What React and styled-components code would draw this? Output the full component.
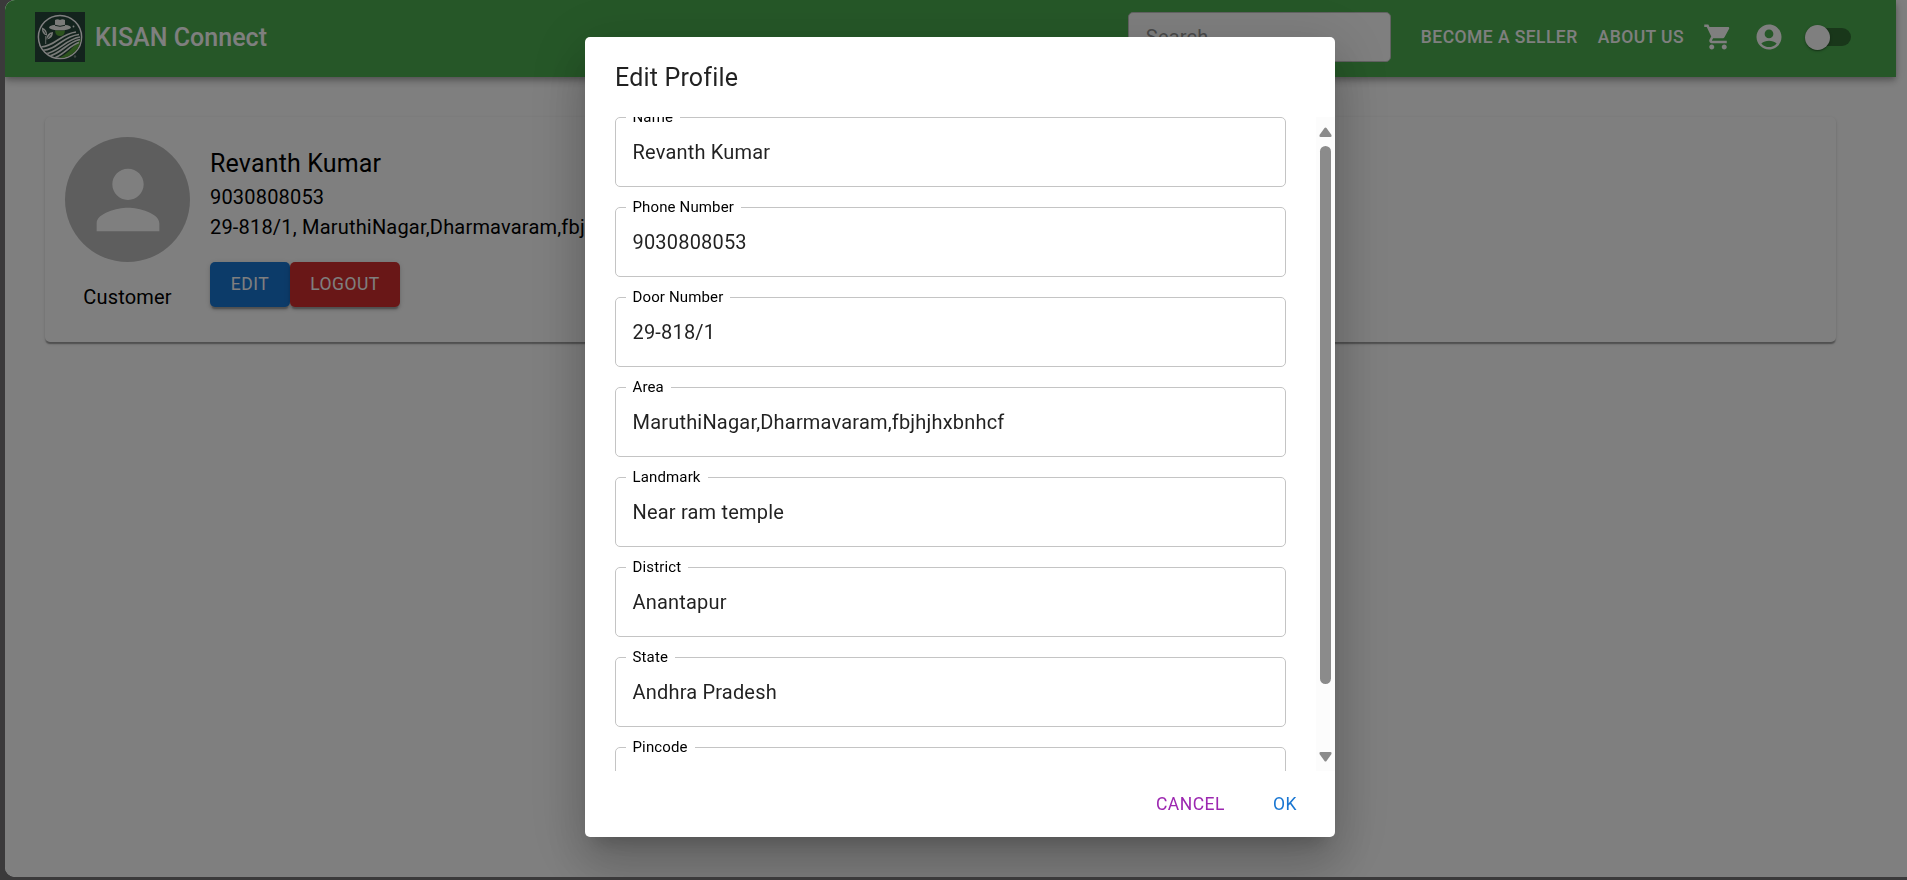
import React from "react";
import styled, { createGlobalStyle, css } from "styled-components";

const GlobalStyle = createGlobalStyle`
  *, *::before, *::after { box-sizing: border-box; }
  html, body { margin: 0; height: 100%; overflow: hidden; }
  body { background: #3b3a3b; font-family: Roboto, "Liberation Sans", sans-serif; color: #000; }
  #root { height: 100%; }
`;

const Window = styled.div`
  height: 100vh;
  padding: 0 0 3px 5px;
`;

const Page = styled.div`
  height: 100%;
  background: #fff;
  border-radius: 10px 0 0 10px;
  overflow: hidden;
  position: relative;
`;

const AppBar = styled.header`
  display: flex;
  align-items: center;
  height: 77px;
  width: 1891px;
  padding: 0 45px 3px 30px;
  background: #4caf50;
  color: #fff;
  box-shadow: 0 2.5px 5px -1px rgba(0, 0, 0, 0.2), 0 5px 6.25px rgba(0, 0, 0, 0.14),
    0 1.25px 12.5px rgba(0, 0, 0, 0.12);
`;

const Brand = styled.h1`
  flex: 1;
  margin: 0 0 0 10px;
  padding-top: 2px;
  font-size: 25px;
  font-weight: 500;
  line-height: 40px;
  letter-spacing: 0.03px;
`;

const SearchBox = styled.input`
  width: 263px;
  height: 50px;
  margin-right: 20px;
  padding: 0 17px;
  border: 1px solid #c4c4c4;
  border-radius: 5px;
  background: #fff;
  font: 400 20px Roboto, sans-serif;
  letter-spacing: 0.19px;
  &::placeholder { color: #949494; opacity: 1; }
`;

const NavLink = styled.a`
  padding: 0 10px;
  font-size: 17.5px;
  font-weight: 500;
  line-height: 31px;
  letter-spacing: 0.44px;
  white-space: nowrap;
`;

const IconButton = styled.span`
  display: flex;
  padding: 0 10.5px;
  &:first-of-type { padding-left: 8.5px; }
  svg { width: 30px; height: 30px; fill: currentColor; }
`;

const Switch = styled.span`
  position: relative;
  width: 46px;
  height: 18px;
  margin-left: 11px;
  border-radius: 9px;
  background: #326e34;
  &::before {
    content: "";
    position: absolute;
    left: 0;
    top: -3px;
    width: 25px;
    height: 25px;
    border-radius: 50%;
    background: #fff;
    box-shadow: 0 2px 1px -1px rgba(0, 0, 0, 0.2), 0 1px 3px rgba(0, 0, 0, 0.3);
  }
`;

const ProfileCard = styled.section`
  display: flex;
  gap: 20px;
  width: 1791px;
  height: 225px;
  margin: 40px 0 0 40px;
  padding: 20px;
  border-radius: 5px;
  background: #fff;
  box-shadow: 0 2.5px 1.25px -1.25px rgba(0, 0, 0, 0.2), 0 1.25px 1.25px rgba(0, 0, 0, 0.14),
    0 1.25px 3.75px rgba(0, 0, 0, 0.12);
`;

const Identity = styled.div`
  display: flex;
  flex-direction: column;
  align-items: center;
  gap: 20px;
`;

const Avatar = styled.div`
  display: grid;
  place-items: center;
  width: 125px;
  height: 125px;
  border-radius: 50%;
  background: #bdbdbd;
  svg { width: 94px; height: 94px; fill: #fff; }
`;

const BodyText = styled.p`
  margin: 0;
  font-size: 20px;
  line-height: 30px;
  letter-spacing: 0.19px;
  white-space: nowrap;
`;

const Details = styled.div`
  padding-top: 5px;
`;

const PersonName = styled.h2`
  height: 40px;
  margin: 0;
  padding-top: 1.5px;
  font-size: 25px;
  font-weight: 400;
  line-height: 39px;
  letter-spacing: 0.16px;
`;

const ButtonRow = styled.div`
  display: flex;
  margin-top: 20px;
`;

const Button = styled.button`
  height: ${(p) => (p.$text ? 46 : 45)}px;
  padding: 0 ${(p) => (p.$text ? 10 : 20)}px;
  border: 0;
  border-radius: 5px;
  font: 400 17.5px/31px Roboto, sans-serif;
  letter-spacing: 0.5px;
  ${(p) =>
    p.$text
      ? css`
          min-width: 80px;
          background: transparent;
          color: ${p.$color};
        `
      : css`
          width: ${p.$width}px;
          background: ${p.$color};
          color: #fff;
          box-shadow: 0 3.75px 1.25px -2.5px rgba(0, 0, 0, 0.2), 0 2.5px 2.5px rgba(0, 0, 0, 0.14),
            0 1.25px 6.25px rgba(0, 0, 0, 0.12);
        `}
`;

const Backdrop = styled.div`
  position: fixed;
  inset: 0 0 3px 5px;
  display: flex;
  justify-content: center;
  align-items: flex-start;
  padding-top: 37px;
  border-radius: 10px 0 0 10px;
  background: rgba(0, 0, 0, 0.5);
  overflow: hidden;
`;

const Dialog = styled.div`
  display: flex;
  flex-direction: column;
  width: 750px;
  height: 800px;
  margin-left: 8px;
  border-radius: 5px;
  background: #fff;
  box-shadow: 0 13.75px 18.75px -8.75px rgba(0, 0, 0, 0.2), 0 30px 47.5px 3.75px rgba(0, 0, 0, 0.14),
    0 11.25px 57.5px 10px rgba(0, 0, 0, 0.12);
`;

const DialogTitle = styled.h2`
  margin: 0;
  padding: 21px 30px 19px;
  color: rgba(0, 0, 0, 0.87);
  font-size: 25px;
  font-weight: 400;
  line-height: 40px;
  letter-spacing: 0.19px;
`;

const DialogContent = styled.div`
  display: flex;
  height: 654px;
  overflow: hidden;
`;

const Fields = styled.div`
  flex: 1;
  padding: 0 30px;
  height: 654px;
  overflow: hidden;
`;

const Field = styled.fieldset`
  height: 79px;
  margin: 0 0 11px;
  margin-top: ${(p) => (p.$first ? -9 : 0)}px;
  padding: 0 16.5px;
  min-width: 0;
  border: 1px solid #c4c4c4;
  border-radius: 5px;
`;

const FieldLabel = styled.legend`
  margin-left: -7px;
  padding: 0 7px;
  font-size: 15px;
  line-height: 18px;
  letter-spacing: 0.14px;
`;

const FieldValue = styled.div`
  padding-top: 11px;
  color: rgba(0, 0, 0, 0.87);
  font-size: 20px;
  line-height: 30px;
  letter-spacing: 0.19px;
`;

const Scrollbar = styled.div`
  display: flex;
  flex-direction: column;
  align-items: center;
  width: 19px;
  padding: 10px 0 9px;
  background: #fcfcfc;
  svg { width: 13px; height: 10px; fill: #8b8b8b; }
`;

const Track = styled.div`
  flex: 1;
  padding-top: 9px;
`;

const Thumb = styled.div`
  width: 11px;
  height: 538px;
  border-radius: 6px;
  background: #8b8b8b;
`;

const DialogActions = styled.div`
  display: flex;
  justify-content: flex-end;
  gap: 10px;
  padding: 10px;
`;

const LogoImage = styled.svg`
  width: 50px;
  height: 50px;
`;

function Logo() {
  return (
    <LogoImage viewBox="0 0 50 50" aria-hidden="true">
      <defs>
        <clipPath id="disc"><circle cx="25" cy="25" r="21" /></clipPath>
      </defs>
      <rect width="50" height="50" fill="#27463b" />
      <circle cx="25" cy="25" r="21.6" fill="none" stroke="#fff" strokeWidth="1.5" />
      <g clipPath="url(#disc)" fill="none" stroke="#f4f7f2" strokeWidth="1.7">
        <path d="M21 47c11-3 17-13 25-20v21z" fill="#58a63a" stroke="none" />
        <path d="M6 35c15-1 19-13 35-15" />
        <path d="M7 38.500c16-1 20-14 37-16" />
        <path d="M9 42c16-2 20-14 36-17" />
        <path d="M13 44.500c14-3 18-14 32-17" />
        <path d="M18 46.500c12-4 16-13 26-16" />
      </g>
      <path d="M20 18.500h10q-.5 5.500-5 5.500T20 18.500z" fill="#58a63a" />
      <path d="M20 8q2.500-1.500 5 0 2.500-1.500 5 0v6H20z" fill="#f4f7f2" />
      <ellipse cx="25" cy="15.400" rx="11" ry="2.900" fill="#f4f7f2" />
      <path d="M20 13.300q5 2 10 0" stroke="#27463b" strokeWidth="1" fill="none" />
      <path d="M7 15.500q5.500 2 5 8-5.500-1-5-8zM18 20q0 7-6.500 7.500Q11 21 18 20z" fill="#f4f7f2" />
      <path d="M10.500 25v7M8.500 18l2.500 4m5 0-4 5" stroke="#27463b" strokeWidth=".7" fill="none" />
      <path d="M10.700 24v8" stroke="#f4f7f2" strokeWidth=".8" />
      <circle cx="38.500" cy="14.500" r=".9" fill="#f4f7f2" />
      <circle cx="40" cy="44.500" r="1.200" fill="#7b8f83" />
    </LogoImage>
  );
}

const Glyph = ({ d }) => (
  <svg viewBox="0 0 24 24" aria-hidden="true"><path d={d} /></svg>
);

const CART = "M7 18c-1.100 0-1.990.9-1.990 2S5.900 22 7 22s2-.9 2-2-.9-2-2-2M1 2v2h2l3.600 7.590-1.350 2.450c-.16.28-.25.61-.25.96 0 1.100.9 2 2 2h12v-2H7.420c-.14 0-.25-.11-.25-.25l.03-.12.9-1.630h7.450c.75 0 1.410-.41 1.750-1.030l3.580-6.490c.08-.14.12-.31.12-.48 0-.55-.45-1-1-1H5.210l-.94-2zm16 16c-1.100 0-1.990.9-1.990 2s.89 2 1.990 2 2-.9 2-2-.9-2-2-2";
const ACCOUNT = "M12 2C6.480 2 2 6.480 2 12s4.480 10 10 10 10-4.480 10-10S17.520 2 12 2m0 4c1.930 0 3.500 1.570 3.500 3.500S13.930 13 12 13s-3.500-1.570-3.500-3.500S10.070 6 12 6m0 14c-2.030 0-4.430-.82-6.140-2.880C7.550 15.800 9.680 15 12 15s4.450.8 6.140 2.120C16.430 19.180 14.030 20 12 20";
const PERSON = "M12 12c2.210 0 4-1.790 4-4s-1.790-4-4-4-4 1.790-4 4 1.790 4 4 4m0 2c-2.670 0-8 1.340-8 4v2h16v-2c0-2.660-5.330-4-8-4";

const FIELDS = [
  ["Name", "Revanth Kumar"],
  ["Phone Number", "9030808053"],
  ["Door Number", "29-818/1"],
  ["Area", "MaruthiNagar,Dharmavaram,fbjhjhxbnhcf"],
  ["Landmark", "Near ram temple"],
  ["District", "Anantapur"],
  ["State", "Andhra Pradesh"],
  ["Pincode", ""],
];

export default function App() {
  return (
    <>
      <GlobalStyle />
      <Window>
        <Page>
          <AppBar>
            <Logo />
            <Brand>KISAN Connect</Brand>
            <SearchBox placeholder="Search…" />
            <NavLink>BECOME A SELLER</NavLink>
            <NavLink>ABOUT US</NavLink>
            <IconButton><Glyph d={CART} /></IconButton>
            <IconButton><Glyph d={ACCOUNT} /></IconButton>
            <Switch />
          </AppBar>
          <ProfileCard>
            <Identity>
              <Avatar><Glyph d={PERSON} /></Avatar>
              <BodyText>Customer</BodyText>
            </Identity>
            <Details>
              <PersonName>Revanth Kumar</PersonName>
              <BodyText>9030808053</BodyText>
              <BodyText>29-818/1, MaruthiNagar,Dharmavaram,fbjhjhxbnhcf</BodyText>
              <ButtonRow>
                <Button $color="#1976d2" $width={80}>EDIT</Button>
                <Button $color="#d32f2f" $width={110}>LOGOUT</Button>
              </ButtonRow>
            </Details>
          </ProfileCard>
        </Page>
      </Window>
      <Backdrop>
        <Dialog role="dialog">
          <DialogTitle>Edit Profile</DialogTitle>
          <DialogContent>
            <Fields>
              {FIELDS.map(([label, value], i) => (
                <Field key={label} $first={i === 0}>
                  <FieldLabel>{label}</FieldLabel>
                  <FieldValue>{value}</FieldValue>
                </Field>
              ))}
            </Fields>
            <Scrollbar>
              <svg viewBox="0 0 13 10"><path d="M5.500 1q1-1 2 0l5 7q.5 2-1 2H1.500q-1.500 0-1-2z" /></svg>
              <Track><Thumb /></Track>
              <svg viewBox="0 0 13 10"><path d="M5.500 9q1 1 2 0l5-7q.5-2-1-2H1.500Q0 0 .5 2z" /></svg>
            </Scrollbar>
          </DialogContent>
          <DialogActions>
            <Button $text $color="#9c27b0">CANCEL</Button>
            <Button $text $color="#1976d2">OK</Button>
          </DialogActions>
        </Dialog>
      </Backdrop>
    </>
  );
}
